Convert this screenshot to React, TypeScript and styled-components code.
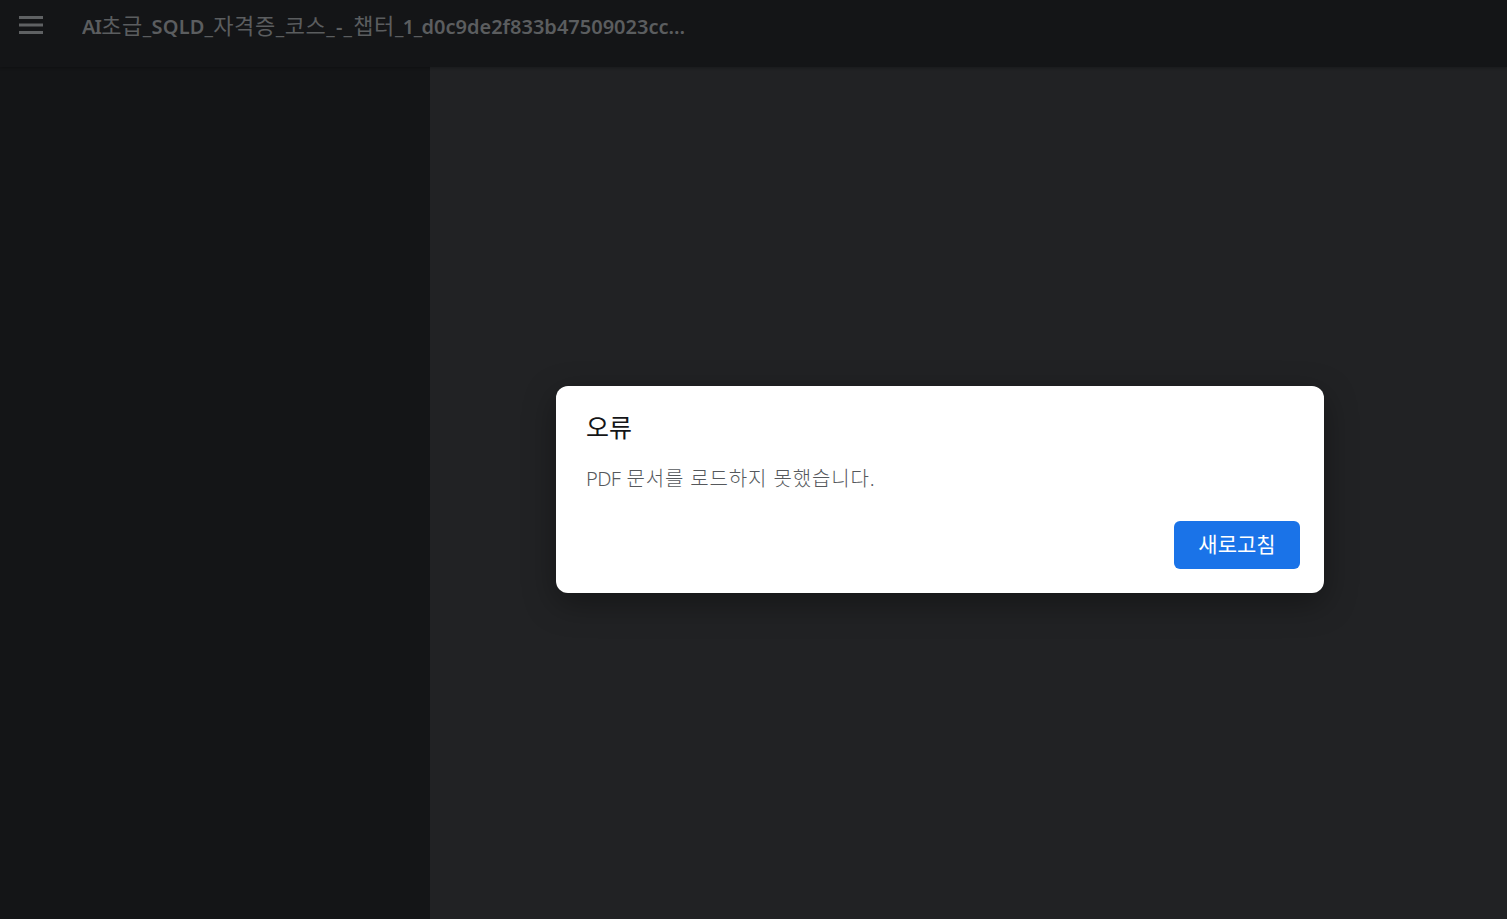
import React from "react";
import styled, { createGlobalStyle } from "styled-components";

const Global = createGlobalStyle`
  html, body { margin: 0; padding: 0; height: 100%; background: #212224; overflow: hidden; }
  #root { height: 100%; }
  * { box-sizing: border-box; }
`;

const fontStack = `"Noto Sans", "Noto Sans CJK KR", sans-serif`;

const Page = styled.div`
  position: relative;
  height: 919px;
  display: flex;
  flex-direction: column;
  font-family: ${fontStack};
  background: #212224;
`;

const Header = styled.header`
  height: 67px;
  flex: none;
  display: flex;
  align-items: flex-start;
  background: #141517;
  box-shadow: 0 1px 3px rgba(0, 0, 0, 0.25);
  z-index: 1;
`;

const MenuButton = styled.button`
  flex: none;
  width: 24px;
  height: 18px;
  margin: 16px 0 0 19px;
  padding: 0;
  border: 0;
  background: none;
  color: #5f6163;
  display: block;
`;

const Title = styled.h1`
  margin: 10px 0 0 39px;
  width: 604px;
  font-size: 20px;
  line-height: 30px;
  font-weight: 600;
  letter-spacing: 0;
  color: #5b5d5f;
  white-space: nowrap;
  overflow: hidden;
  text-overflow: ellipsis;
`;

const Hangul = styled.span`
  font-size: 22px;
  font-weight: 400;
  letter-spacing: 0.6px;
`;

const Run = styled.span<{ $spacing: number }>`
  letter-spacing: ${(p) => p.$spacing}px;
`;

const Body = styled.div`
  flex: 1;
  display: flex;
  min-height: 0;
`;

const Sidebar = styled.aside`
  width: 430px;
  flex: none;
  background: #141517;
`;

const Main = styled.main`
  flex: 1;
  background: #212224;
`;

const Overlay = styled.div`
  position: absolute;
  inset: 0;
  z-index: 2;
  padding: 386px 0 0 556px;
`;

const Dialog = styled.div`
  width: 768px;
  height: 207px;
  padding: 25px 24px 24px 30px;
  display: flex;
  flex-direction: column;
  background: #fff;
  border-radius: 12px;
  box-shadow: 0 10px 32px rgba(0, 0, 0, 0.36);
`;

const DialogTitle = styled.h2`
  margin: 0;
  font-size: 25px;
  line-height: 32px;
  font-weight: 400;
  color: #141517;
`;

const Message = styled.p`
  margin: 22px 0 0;
  font-size: 20px;
  line-height: 27px;
  font-weight: 300;
  letter-spacing: 0.87px;
  color: #55585c;
`;

const Actions = styled.div`
  margin-top: auto;
  display: flex;
  justify-content: flex-end;
`;

const Refresh = styled.button`
  width: 126px;
  height: 48px;
  border: 0;
  border-radius: 6px;
  background: #1a73e8;
  color: #fff;
  font-family: ${fontStack};
  font-size: 21px;
  font-weight: 400;
  padding: 0 0 4px;
`;

export default function App() {
  return (
    <Page>
      <Global />
      <Header>
        <MenuButton aria-label="메뉴">
          <svg width="24" height="18" viewBox="0 0 24 18" fill="currentColor">
            <rect x="0" y="0" width="24" height="3" />
            <rect x="0" y="7.5" width="24" height="3" />
            <rect x="0" y="15" width="24" height="3" />
          </svg>
        </MenuButton>
        <Title>
          <Run $spacing={-0.85}>AI</Run>
          <Hangul>초급</Hangul>
          <Run $spacing={0.2}>_SQLD_</Run>
          <Hangul>자격증</Hangul>
          <Run $spacing={0.4}>_</Run>
          <Hangul>코스</Hangul>
          <Run $spacing={1.2}>_-_</Run>
          <Hangul>챕터</Hangul>
          <Run $spacing={-0.6}>_1_</Run>d0c9de2f833b47509023cc4b1e7a9f02.pdf
        </Title>
      </Header>
      <Body>
        <Sidebar />
        <Main />
      </Body>
      <Overlay>
        <Dialog>
          <DialogTitle>오류</DialogTitle>
          <Message>
            <Run $spacing={-0.6}>PDF</Run> 문서를 로드하지 못했습니다.
          </Message>
          <Actions>
            <Refresh>새로고침</Refresh>
          </Actions>
        </Dialog>
      </Overlay>
    </Page>
  );
}
